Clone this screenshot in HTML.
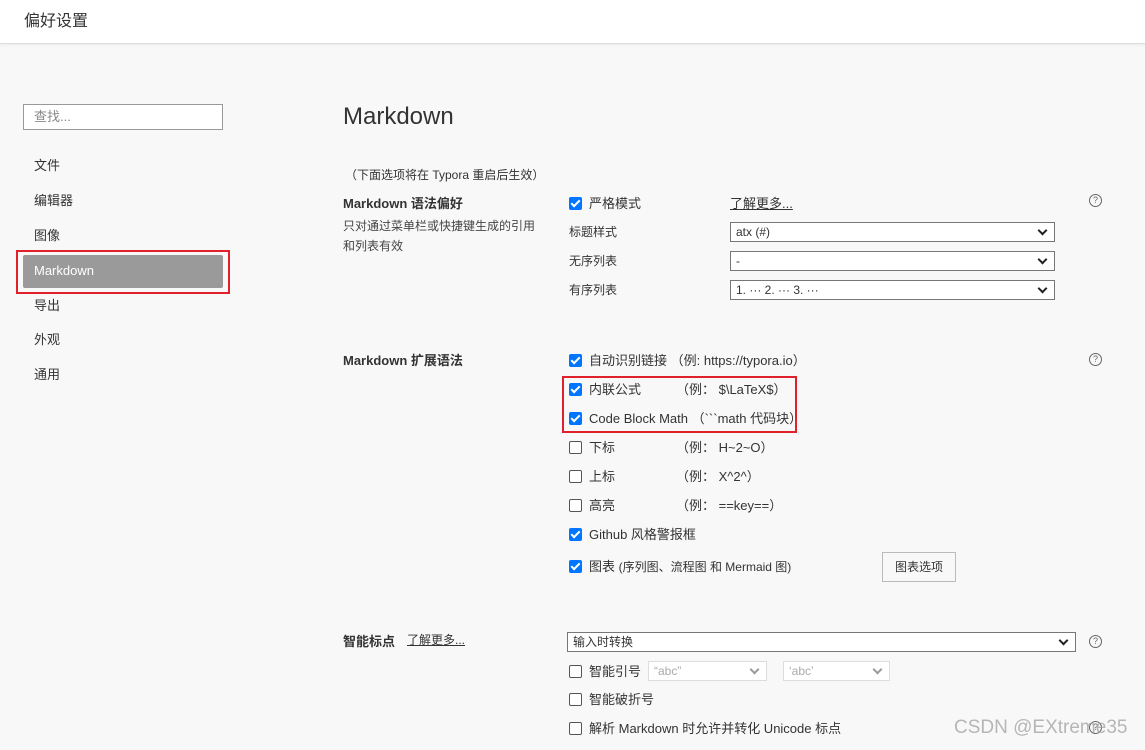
<!DOCTYPE html><html><head><meta charset="utf-8"><style>
*{box-sizing:border-box;margin:0;padding:0}
body{width:1145px;height:750px;overflow:hidden;background:#f8f8f8;font-family:"Liberation Sans","Noto Sans CJK SC",sans-serif;font-size:13px;color:#333;position:relative}
.a{position:absolute;white-space:nowrap}
.hdr{position:absolute;left:0;top:0;width:1145px;height:44px;background:#fff;border-bottom:1px solid #ddd;box-shadow:0 1px 3px rgba(0,0,0,.06)}
.cb{position:absolute;width:13px;height:13px;border-radius:2px}
.on{background:#0075ff}
.on::after{content:"";position:absolute;left:4px;top:1px;width:3px;height:7px;border:solid #fff;border-width:0 2px 2px 0;transform:rotate(45deg)}
.off{border:1px solid #555;background:#fff}
.sel{position:absolute;border:1px solid #777;background:#fff;height:20px;padding-left:5px;line-height:18px;font-size:12px}
.sel::after{content:"";position:absolute;right:8px;top:4px;width:5px;height:5px;border:solid #222;border-width:0 2px 2px 0;transform:rotate(45deg)}
.dis{border-color:#ddd;color:#aaa}.dis::after{border-color:#999}
.q{position:absolute;width:13px;height:13px;border:1px solid #666;border-radius:50%;font-size:9px;line-height:11px;text-align:center;color:#666}
.red{position:absolute;border:2px solid #e0202a}
</style></head><body>
<div class="hdr"></div>
<div class="a" style="left:24px;top:7px;font-size:16px;color:#333">偏好设置</div>
<div class="a" style="left:23px;top:104px;width:200px;height:26px;border:1px solid #999;background:#fff;padding-left:10px;line-height:24px;color:#888">查找...</div>
<div class="a" style="left:34px;top:155px">文件</div>
<div class="a" style="left:34px;top:190px">编辑器</div>
<div class="a" style="left:34px;top:225px">图像</div>
<div class="a" style="left:23px;top:255px;width:200px;height:33px;background:#9a9a9a;border-radius:2px;color:#fff;padding-left:11px;line-height:31px">Markdown</div>
<div class="red" style="left:16px;top:250px;width:214px;height:44px"></div>
<div class="a" style="left:34px;top:295px">导出</div>
<div class="a" style="left:34px;top:329px">外观</div>
<div class="a" style="left:34px;top:364px">通用</div>

<div class="a" style="left:343px;top:103px;font-size:24px;color:#333">Markdown</div>
<div class="a" style="left:345px;top:166px;font-size:12px">（下面选项将在 Typora 重启后生效）</div>
<div class="a" style="left:343px;top:193px;font-weight:bold">Markdown 语法偏好</div>
<div class="a" style="left:343px;top:216px;font-size:12px;line-height:20px;color:#444">只对通过菜单栏或快捷键生成的引用<br>和列表有效</div>
<div class="cb on" style="left:569px;top:197px"></div><div class="a" style="left:589px;top:193px">严格模式</div>
<div class="a" style="left:730px;top:193px;text-decoration:underline">了解更多...</div>
<div class="q" style="left:1089px;top:194px">?</div>
<div class="a" style="left:569px;top:223px;font-size:12px">标题样式</div><div class="sel" style="left:730px;top:222px;width:325px">atx (#)</div>
<div class="a" style="left:569px;top:252px;font-size:12px">无序列表</div><div class="sel" style="left:730px;top:251px;width:325px">-</div>
<div class="a" style="left:569px;top:281px;font-size:12px">有序列表</div><div class="sel" style="left:730px;top:280px;width:325px">1. ··· 2. ··· 3. ···</div>

<div class="a" style="left:343px;top:350px;font-weight:bold">Markdown 扩展语法</div>
<div class="q" style="left:1089px;top:353px">?</div>
<div class="cb on" style="left:569px;top:354px"></div><div class="a" style="left:589px;top:350px">自动识别链接 （例: https://typora.io）</div>
<div class="cb on" style="left:569px;top:383px"></div><div class="a" style="left:589px;top:379px">内联公式</div><div class="a" style="left:676px;top:379px">（例： $\LaTeX$）</div>
<div class="cb on" style="left:569px;top:412px"></div><div class="a" style="left:589px;top:408px">Code Block Math （&#96;&#96;&#96;math 代码块）</div>
<div class="red" style="left:562px;top:376px;width:235px;height:57px"></div>
<div class="cb off" style="left:569px;top:441px"></div><div class="a" style="left:589px;top:437px">下标</div><div class="a" style="left:676px;top:437px">（例： H~2~O）</div>
<div class="cb off" style="left:569px;top:470px"></div><div class="a" style="left:589px;top:466px">上标</div><div class="a" style="left:676px;top:466px">（例： X^2^）</div>
<div class="cb off" style="left:569px;top:499px"></div><div class="a" style="left:589px;top:495px">高亮</div><div class="a" style="left:676px;top:495px">（例： ==key==）</div>
<div class="cb on" style="left:569px;top:528px"></div><div class="a" style="left:589px;top:524px">Github 风格警报框</div>
<div class="cb on" style="left:569px;top:560px"></div><div class="a" style="left:589px;top:556px">图表 <span style="font-size:12px">(序列图、流程图 和 Mermaid 图)</span></div>
<div class="a" style="left:882px;top:552px;width:74px;height:30px;border:1px solid #bbb;background:#f8f8f8;text-align:center;line-height:28px;font-size:12px">图表选项</div>

<div class="a" style="left:343px;top:631px;font-weight:bold">智能标点</div>
<div class="a" style="left:407px;top:631px;font-size:12px;text-decoration:underline">了解更多...</div>
<div class="sel" style="left:567px;top:632px;width:509px">输入时转换</div>
<div class="q" style="left:1089px;top:635px">?</div>
<div class="cb off" style="left:569px;top:665px"></div><div class="a" style="left:589px;top:661px">智能引号</div>
<div class="sel dis" style="left:648px;top:661px;width:119px">“abc”</div>
<div class="sel dis" style="left:783px;top:661px;width:107px">‘abc’</div>
<div class="cb off" style="left:569px;top:693px"></div><div class="a" style="left:589px;top:689px">智能破折号</div>
<div class="cb off" style="left:569px;top:722px"></div><div class="a" style="left:589px;top:718px">解析 Markdown 时允许并转化 Unicode 标点</div>
<div class="q" style="left:1089px;top:721px">?</div>
<div class="a" style="left:954px;top:717px;font-size:19px;color:rgba(160,160,160,.75)">CSDN @EXtreme35</div>
</body></html>
